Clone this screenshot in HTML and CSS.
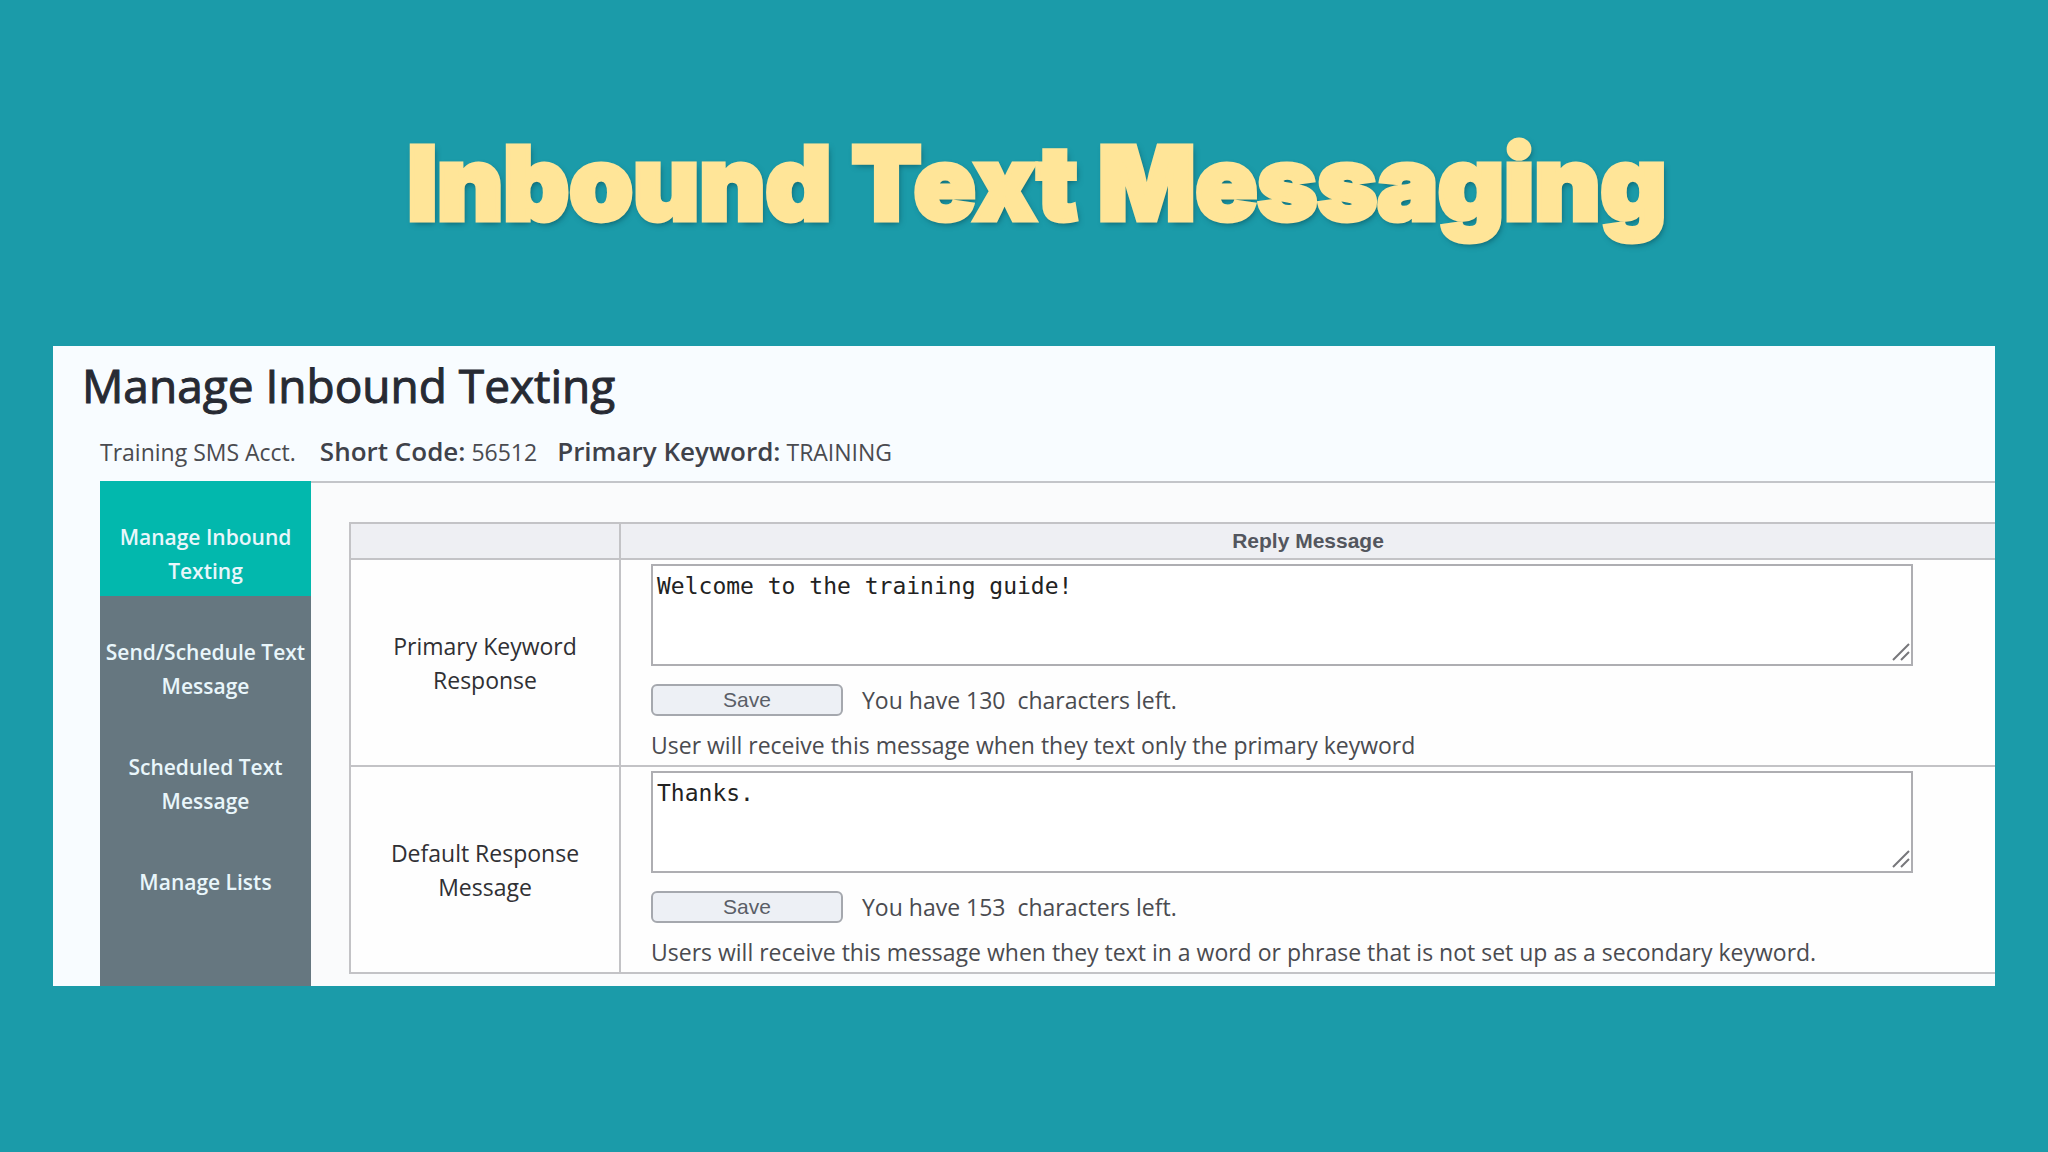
FILE: index.html
```html
<!DOCTYPE html>
<html lang="en">
<head>
    <meta charset="UTF-8">
    <meta name="viewport" content="width=device-width, initial-scale=1.0">
    <title>Inbound Text Messaging</title>
    <link rel="stylesheet" href="styles.css">
</head>
<body>
    <h1 class="slide-title">Inbound Text Messaging</h1>
    <main class="panel">
        <h2 class="panel-title">Manage Inbound Texting</h2>
        <div class="account">
            <span class="account-name">Training SMS Acct.</span>
            <span class="account-item"><b>Short Code:</b> 56512</span>
            <span class="account-item"><b>Primary Keyword:</b> TRAINING</span>
        </div>
        <div class="content">
            <nav class="sidebar">
                <a class="active" href="#">Manage Inbound Texting</a>
                <a href="#">Send/Schedule Text Message</a>
                <a href="#">Scheduled Text Message</a>
                <a href="#">Manage Lists</a>
            </nav>
            <div class="replies">
                <table class="reply-table">
                    <thead>
                        <tr><th class="name-col"></th><th>Reply Message</th></tr>
                    </thead>
                    <tbody>
                        <tr>
                            <td class="name"><label for="primaryReply">Primary Keyword Response</label></td>
                            <td class="reply">
                                <div class="reply-box">
                                    <textarea id="primaryReply">Welcome to the training guide!</textarea>
                                    <svg class="grip" viewBox="0 0 20 20"><path d="M2 18L18 2M10 18L18 10" /></svg>
                                </div>
                                <div class="actions">
                                    <button type="button">Save</button>
                                    <span>You have 130&nbsp; characters left.</span>
                                </div>
                                <p class="hint">User will receive this message when they text only the primary keyword</p>
                            </td>
                        </tr>
                        <tr>
                            <td class="name"><label for="defaultReply">Default Response Message</label></td>
                            <td class="reply">
                                <div class="reply-box">
                                    <textarea id="defaultReply">Thanks.</textarea>
                                    <svg class="grip" viewBox="0 0 20 20"><path d="M2 18L18 2M10 18L18 10" /></svg>
                                </div>
                                <div class="actions">
                                    <button type="button">Save</button>
                                    <span>You have 153&nbsp; characters left.</span>
                                </div>
                                <p class="hint">Users will receive this message when they text in a word or phrase that is not set up as a secondary keyword.</p>
                            </td>
                        </tr>
                    </tbody>
                </table>
            </div>
        </div>
    </main>
</body>
</html>
```
FILE: styles.css
```css
* { margin: 0; padding: 0; box-sizing: border-box; }
body {
    font-family: 'Open Sans', 'Noto Sans', sans-serif;
    font-size: 23px;
    color: #4a4b50;
    background: #1b9ba9;
    min-height: 100vh;
    padding: 120px 53px 0;
}
.slide-title {
    font-family: Inter, sans-serif;
    font-size: 102px;
    font-weight: 900;
    line-height: 126px;
    text-align: center;
    color: #ffe598;
    -webkit-text-stroke: 5px #ffe598;
    text-shadow: 2px 3px 6px rgba(0, 50, 60, 0.6);
    margin: 0 0 100px 26px;
}
.panel { background: #f8fcff; padding-top: 8px; overflow: hidden; }
.panel-title {
    font-size: 46px;
    font-weight: 400;
    line-height: 62px;
    color: #272a33;
    -webkit-text-stroke: 1px #272a33;
    padding-left: 29px;
}
.account {
    display: flex;
    align-items: baseline;
    gap: 20px;
    padding: 15px 0 9px 47px;
    line-height: 40px;
}
.account-name { padding-right: 4px; }
.account b { font-size: 26px; font-weight: 600; color: #3f424a; }
.content { display: flex; margin-left: 47px; }
.sidebar {
    flex: 0 0 211px;
    background: #667780;
}
.sidebar a {
    display: block;
    padding: 39px 2px 8px;
    font-size: 21px;
    font-weight: 600;
    line-height: 34px;
    text-align: center;
    text-decoration: none;
    color: #e9f6fb;
}
.sidebar a.active { background: #02b8ad; }
.replies {
    flex: 1;
    border-top: 2px solid #c3c5c9;
    background: #fafbfc;
    padding: 39px 0 12px 38px;
}
.reply-table { width: 100%; border-collapse: collapse; background: #fefefe; }
.reply-table th, .reply-table td { border: 2px solid #c3c3c6; border-right: none; }
.reply-table th {
    height: 36px;
    background: #eeeff3;
    font-family: 'Liberation Sans', Arial, sans-serif;
    font-size: 21px;
    line-height: 32px;
    color: #53565e;
}
.name-col { width: 270px; }
.name {
    padding: 0 30px;
    line-height: 34px;
    text-align: center;
    color: #303034;
}
.reply { height: 207px; padding: 4px 82px 0 30px; vertical-align: top; }
.reply-box { position: relative; }
.reply-box textarea {
    display: block;
    width: 100%;
    height: 102px;
    padding: 4px;
    border: 2px solid #aeaeb2;
    background: #fff;
    font: 23px/32px 'DejaVu Sans Mono', monospace;
    color: #222;
    resize: none;
}
.grip {
    position: absolute;
    right: 2px;
    bottom: 4px;
    width: 20px;
    height: 20px;
    fill: none;
    stroke: #77777b;
    stroke-width: 2;
    pointer-events: none;
}
.actions { display: flex; align-items: center; gap: 19px; margin-top: 17px; line-height: 34px; }
.actions button {
    width: 192px;
    height: 32px;
    border: 2px solid #a5a8ae;
    border-radius: 6px;
    background: #edf0f5;
    font: 21px 'Liberation Sans', Arial, sans-serif;
    color: #5a5e67;
}
.hint { margin-top: 11px; line-height: 34px; }
```
